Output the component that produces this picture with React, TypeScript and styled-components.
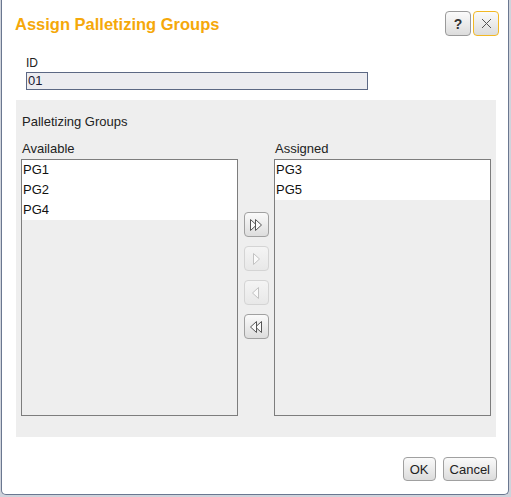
import styled, { createGlobalStyle } from "styled-components";

const GlobalStyle = createGlobalStyle`
  html, body {
    margin: 0;
    padding: 0;
    background: #cfd3db;
    font-family: "Liberation Sans", Arial, sans-serif;
  }
`;

const available = ["PG1", "PG2", "PG4"];
const assigned = ["PG3", "PG5"];

type ArrowKind = "allRight" | "right" | "left" | "allLeft";

const Arrow = ({ kind, color }: { kind: ArrowKind; color: string }) => {
  const tri = (x: number, dir: 1 | -1) =>
    dir === 1
      ? `M${x} 2.5 L${x + 6} 8 L${x} 13.5 Z`
      : `M${x} 2.5 L${x - 6} 8 L${x} 13.5 Z`;
  let paths: string[] = [];
  if (kind === "allRight") paths = [tri(2.5, 1), tri(7.5, 1)];
  if (kind === "right") paths = [tri(5.5, 1)];
  if (kind === "left") paths = [tri(10.5, -1)];
  if (kind === "allLeft") paths = [tri(13.5, -1), tri(8.5, -1)];
  return (
    <svg width="16" height="16" viewBox="0 0 16 16">
      {paths.map((d, i) => (
        <path key={i} d={d} fill="#fafafa" stroke={color} strokeWidth="1" />
      ))}
    </svg>
  );
};

const App = () => {
  return (
    <>
      <GlobalStyle />
      <SDialog>
        <SHeader>
          <STitle>Assign Palletizing Groups</STitle>
          <SIconButton>?</SIconButton>
          <SIconButton $accent>
            <svg width="11" height="11" viewBox="0 0 11 11">
              <path d="M1 1 L10 10 M10 1 L1 10" stroke="#555" strokeWidth="1" />
            </svg>
          </SIconButton>
        </SHeader>

        <SIdField>
          <label>ID</label>
          <div className="idInput">01</div>
        </SIdField>

        <SPanel>
          <p className="heading">Palletizing Groups</p>
          <SColumns>
            <SColumn>
              <span className="label">Available</span>
              <SList>
                {available.map((g) => (
                  <SItem key={g}>{g}</SItem>
                ))}
              </SList>
            </SColumn>
            <SMover>
              <SMoveButton>
                <Arrow kind="allRight" color="#555" />
              </SMoveButton>
              <SMoveButton $disabled>
                <Arrow kind="right" color="#c2c2c2" />
              </SMoveButton>
              <SMoveButton $disabled>
                <Arrow kind="left" color="#c2c2c2" />
              </SMoveButton>
              <SMoveButton>
                <Arrow kind="allLeft" color="#555" />
              </SMoveButton>
            </SMover>
            <SColumn>
              <span className="label">Assigned</span>
              <SList>
                {assigned.map((g) => (
                  <SItem key={g}>{g}</SItem>
                ))}
              </SList>
            </SColumn>
          </SColumns>
        </SPanel>

        <SFooter>
          <SButton>OK</SButton>
          <SButton>Cancel</SButton>
        </SFooter>
      </SDialog>
    </>
  );
};
export default App;

const SDialog = styled.div`
  box-sizing: border-box;
  width: 508px;
  height: 495px;
  margin-left: 1px;
  background: #fff;
  border: 1px solid #6a7790;
  border-top: none;
  border-radius: 0 0 5px 5px;
  display: flex;
  flex-direction: column;
`;

const SHeader = styled.div`
  display: flex;
  align-items: center;
  gap: 2px;
  padding: 11px 9px 0 13px;
  height: 25px;
`;

const STitle = styled.h1`
  flex: 1;
  margin: 0;
  padding-top: 1px;
  font-size: 16.5px;
  font-weight: bold;
  color: #f5a80a;
`;

const SIconButton = styled.button<{ $accent?: boolean }>`
  box-sizing: border-box;
  width: 26px;
  height: 25px;
  padding: 0;
  display: flex;
  align-items: center;
  justify-content: center;
  border: 1px solid ${(p) => (p.$accent ? "#f2b824" : "#9a9a9a")};
  border-radius: 4px;
  background: linear-gradient(#fbfbfb, #dcdcdc);
  font-family: "Liberation Sans", Arial, sans-serif;
  font-size: 14px;
  font-weight: bold;
  color: #333;
`;

const SIdField = styled.div`
  margin: 20px 0 0 24px;
  display: flex;
  flex-direction: column;
  gap: 2px;
  font-size: 12px;

  & label {
    line-height: 14px;
    color: #222;
  }

  & .idInput {
    box-sizing: border-box;
    width: 342px;
    height: 18px;
    padding-left: 1px;
    border: 1px solid #5c6884;
    background: #ececf0;
    font-size: 13px;
    line-height: 16px;
    color: #1a1a33;
  }
`;

const SPanel = styled.div`
  margin: 10px 0 0 14px;
  width: 480px;
  box-sizing: border-box;
  padding: 14px 5px 21px 5px;
  background: #eeeeee;
  font-size: 13px;
  color: #222;

  & .heading {
    margin: 0 0 12px 1px;
    line-height: 15px;
  }
`;

const SColumns = styled.div`
  display: grid;
  grid-template-columns: 217px 36px 217px;
`;

const SColumn = styled.div`
  display: flex;
  flex-direction: column;

  & .label {
    line-height: 15px;
    margin: 0 0 3px 1px;
  }
`;

const SList = styled.div`
  box-sizing: border-box;
  height: 257px;
  border: 1px solid #7d7d7d;
  background: #eeeeee;
  display: flex;
  flex-direction: column;
`;

const SItem = styled.div`
  height: 20px;
  line-height: 20px;
  padding-left: 1px;
  background: #fff;
  color: #111;
`;

const SMover = styled.div`
  display: flex;
  flex-direction: column;
  align-items: center;
  gap: 9px;
  padding-top: 71px;
`;

const SMoveButton = styled.button<{ $disabled?: boolean }>`
  box-sizing: border-box;
  width: 25px;
  height: 25px;
  padding: 0;
  display: flex;
  align-items: center;
  justify-content: center;
  border: 1px solid ${(p) => (p.$disabled ? "#d4d4d4" : "#a0a0a0")};
  border-radius: 4px;
  background: ${(p) =>
    p.$disabled ? "linear-gradient(#f4f4f4, #e8e8e8)" : "linear-gradient(#fafafa, #dddddd)"};
`;

const SFooter = styled.div`
  display: flex;
  justify-content: flex-end;
  gap: 7px;
  margin-top: 20px;
  padding-right: 11px;
`;

const SButton = styled.button`
  box-sizing: border-box;
  height: 24px;
  padding: 0 6px;
  border: 1px solid #a0a0a0;
  border-radius: 4px;
  background: linear-gradient(#fafafa, #dcdcdc);
  font-family: "Liberation Sans", Arial, sans-serif;
  font-size: 13px;
  color: #222;
`;
